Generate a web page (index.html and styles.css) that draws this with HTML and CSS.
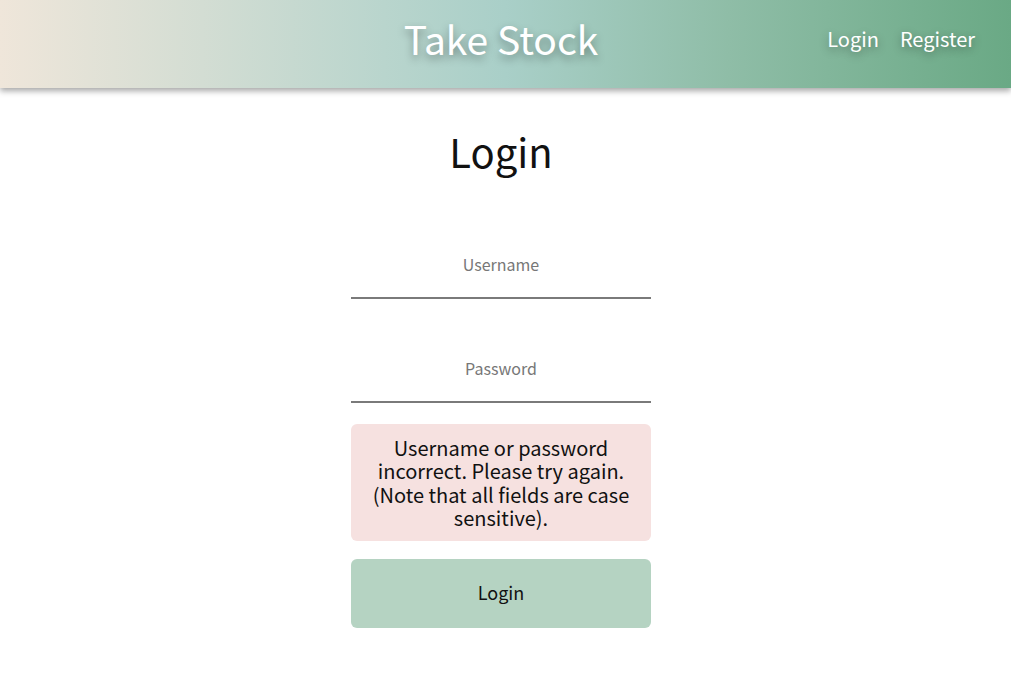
FILE: index.html
```html
<!DOCTYPE html>
<html>
<head>
<meta charset="utf-8">
<link rel="stylesheet" href="styles.css">
</head>
<body>
<header class="topbar">
  <div class="brand">Take Stock</div>
  <nav class="nav">
    <a class="nav-link" href="#">Login</a>
    <a class="nav-link" href="#">Register</a>
  </nav>
</header>
<main class="main">
  <h1 class="title">Login</h1>
  <form class="form">
    <input class="field" type="text" placeholder="Username">
    <input class="field" type="password" placeholder="Password">
    <div class="error">Username or password incorrect. Please try again. (Note that all fields are case sensitive).</div>
    <button class="btn" type="button">Login</button>
  </form>
</main>
</body>
</html>
```
FILE: styles.css
```css
* { box-sizing: border-box; }
body {
  margin: 0;
  font-family: "Noto Sans CJK KR", "Open Sans", sans-serif;
  background: #fff;
  color: #111;
}
.topbar {
  position: relative;
  height: 88px;
  display: flex;
  align-items: center;
  justify-content: center;
  padding: 0 9px 12px 0;
  background: linear-gradient(90deg, #efe6da 0%, #d3ddd3 20%, #b9d5cd 38%, #a9cfc8 50%, #8fbda7 72%, #6aa985 100%);
  box-shadow: 0 3px 6px rgba(0,0,0,0.35);
}
.brand {
  color: #fff;
  font-size: 39px;
  text-shadow: 0 4px 8px rgba(0,0,0,0.35);
}
.nav {
  position: absolute;
  right: 36px;
  top: 0;
  height: 76px;
  display: flex;
  align-items: center;
  gap: 21px;
}
.nav-link {
  color: #fff;
  text-decoration: none;
  font-size: 20px;
  text-shadow: 0 3px 8px rgba(0,0,0,0.35);
}
.main {
  display: flex;
  flex-direction: column;
  align-items: center;
  padding-right: 9px;
}
.title {
  font-weight: normal;
  font-size: 40px;
  margin: 36px 0 0;
  line-height: 54px;
}
.form {
  width: 300px;
  display: flex;
  flex-direction: column;
  margin-top: 54px;
}
.field {
  font-family: inherit;
  border: none;
  border-bottom: 2px solid #7a7a7a;
  height: 67px;
  font-size: 16px;
  text-align: center;
  outline: none;
  padding: 0 0 2px;
  margin-bottom: 37px;
}
.field:last-of-type { margin-bottom: 21px; }
.field::placeholder { color: #777; }
.error {
  background: #f6e1e0;
  border-radius: 6px;
  padding: 12px 16px;
  text-align: center;
  font-size: 20px;
  line-height: 23.3px;
  color: #111;
}
.btn {
  margin-top: 18px;
  height: 69px;
  padding: 0 0 4px;
  border: none;
  border-radius: 6px;
  background: #b5d3c2;
  font-family: inherit;
  font-size: 18px;
  color: #111;
}
```
